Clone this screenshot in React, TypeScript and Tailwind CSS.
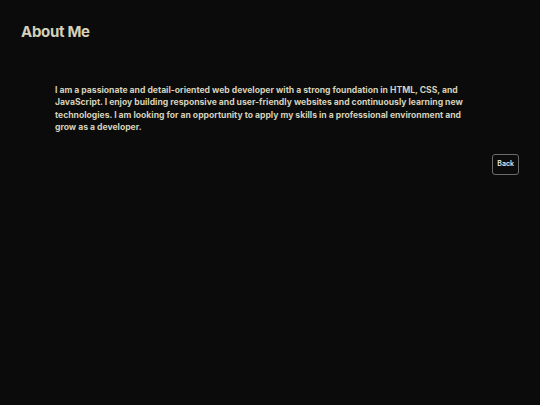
export default function App() {
  return (
    <div className="min-h-[405px] w-full bg-[#0b0b0b] font-['Inter','Noto_Sans',sans-serif] text-[#d4d0ba]">
      <header className="px-[21px] pt-[22px]">
        <h1 className="text-[15px] font-bold leading-5 tracking-[-0.3px]">About Me</h1>
      </header>
      <main className="pl-[55px] pr-[21px] pt-[42px]">
        <p className="w-[410px] text-[8.6px] font-bold leading-[12.3px]">
          I am a passionate and detail-oriented web developer with a strong foundation in HTML, CSS, and
          JavaScript. I enjoy building responsive and user-friendly websites and continuously learning new
          technologies. I am looking for an opportunity to apply my skills in a professional environment and
          grow as a developer.
        </p>
        <div className="mt-[21px] flex justify-end">
          <button className="h-[21px] rounded-[3px] border border-[#6b6b6b] px-[4px] text-[7px] font-semibold text-[#e8e8e8]">
            Back
          </button>
        </div>
      </main>
    </div>
  );
}
